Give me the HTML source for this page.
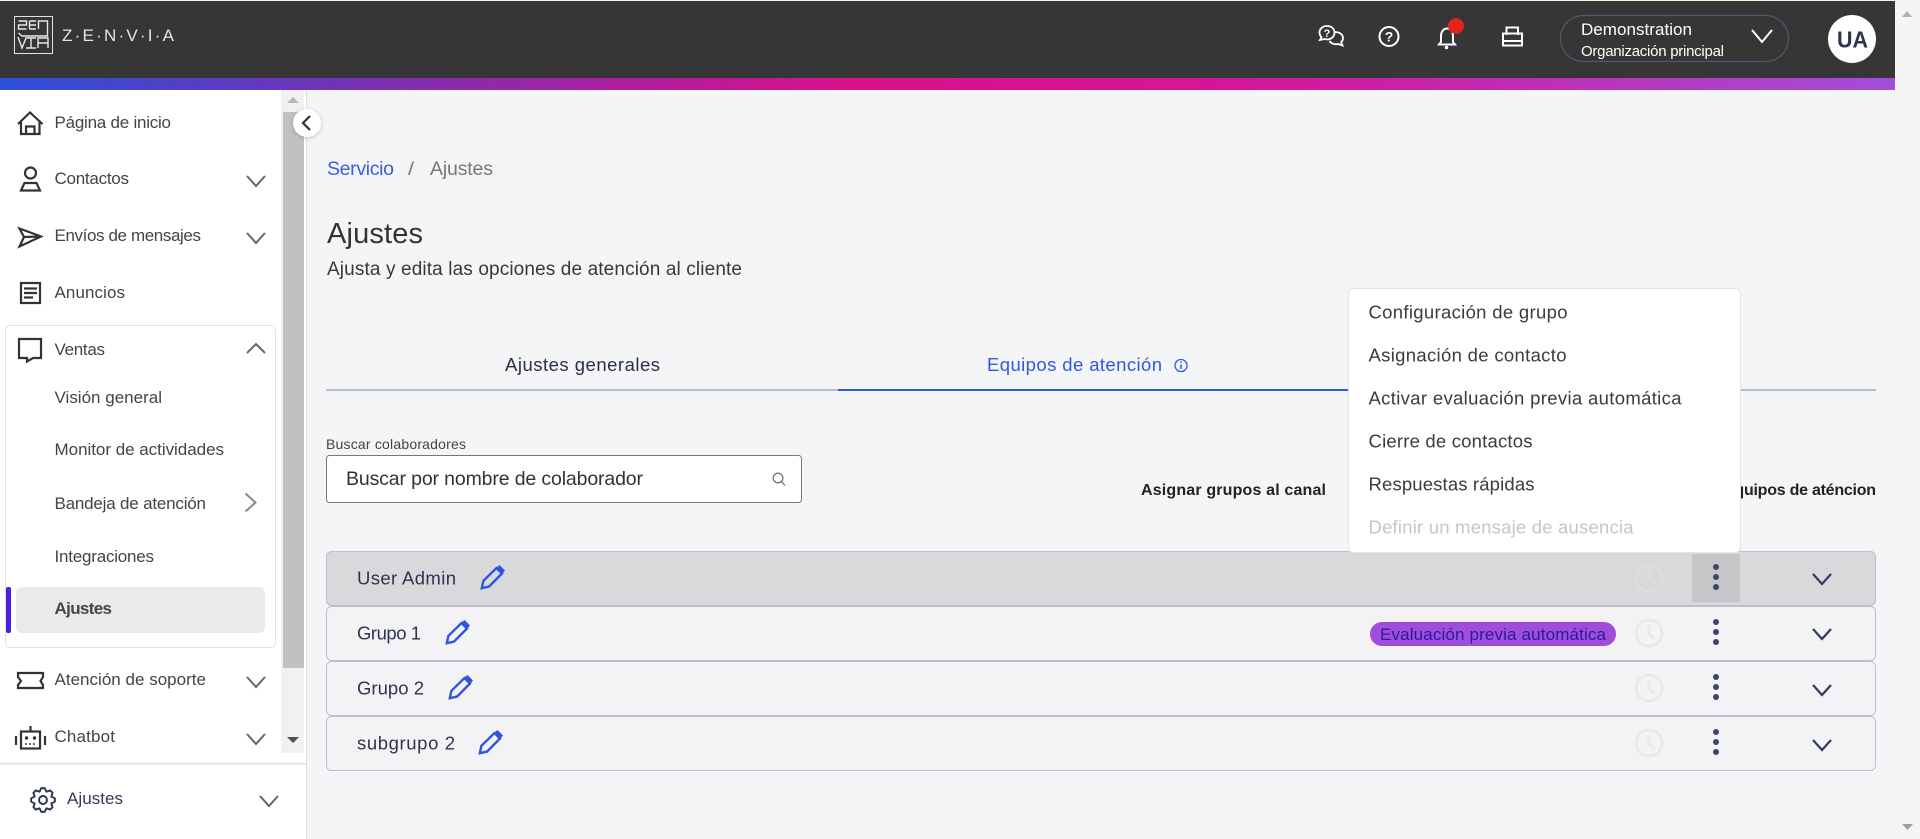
<!DOCTYPE html>
<html lang="es"><head><meta charset="utf-8"><title>Ajustes</title>
<style>
html,body{margin:0;padding:0;width:1920px;height:839px;overflow:hidden;background:#f4f5f7}
svg{display:block;font-family:"Liberation Sans",sans-serif}
.s{font-size:17px;fill:#444}
.m{font-size:18.500px;fill:#3c3c3c}
.r{font-size:18.500px;fill:#2f3350}
.ic{fill:none;stroke:#333;stroke-width:2.200}
.ch{fill:none;stroke:#666;stroke-width:2}
.rc{fill:none;stroke:#2e3a5e;stroke-width:2.200}
.cl{fill:none;stroke:#e9e9ea;stroke-width:3}
.d{fill:#3c4470}
.w{fill:none;stroke:#fff;stroke-width:2}
</style></head><body>
<svg width="1920" height="839" viewBox="0 0 1920 839" xmlns="http://www.w3.org/2000/svg">
<defs>
<linearGradient id="g" x1="0" x2="1895" y1="0" y2="0" gradientUnits="userSpaceOnUse">
<stop offset="0" stop-color="#2b50d8"/><stop offset=".17" stop-color="#7033b8"/><stop offset=".45" stop-color="#d9108c"/><stop offset=".68" stop-color="#d2189c"/><stop offset="1" stop-color="#a34ddb"/>
</linearGradient>
<filter id="sh" x="-30%" y="-30%" width="160%" height="160%"><feDropShadow dx="0" dy="1" stdDeviation="2" flood-color="#000" flood-opacity=".22"/></filter>
<g id="pen"><path d="M0.800 23.200L2.400 15.800L15.500 3L21 8.500L8 21.600Z" fill="none" stroke="#2f55e0" stroke-width="2.400"/><path d="M15 3L18.500 0L24 5.500L21 9.200Z" fill="#2f55e0"/></g>
<g id="clk"><circle r="13" class="cl"/><path d="M0-8V1L6 6" class="cl"/></g>
<g id="dots"><circle cy="-10" r="3" class="d"/><circle r="3" class="d"/><circle cy="10" r="3" class="d"/></g>
<path id="dn" d="M-9-5L0 5L9-5" />
</defs>

<rect width="1920" height="839" fill="#f4f5f7"/>
<rect y="790" width="1895" height="49" fill="#f3f3f4"/>
<rect x="1895" width="25" height="839" fill="#f5f5f5"/>
<path d="M1907 11L1902 17H1912Z" fill="#b0b0b0"/>
<path d="M1902 824H1913L1907.500 830Z" fill="#a0a0a0"/>

<!-- header -->
<rect width="1920" height="1" fill="#f2f2f2"/>
<rect y="1" width="1895" height="77" fill="#363636"/>
<rect y="78" width="1895" height="12" fill="url(#g)"/>
<rect x="14.500" y="16.500" width="38" height="37" fill="none" stroke="#e4e4e4" stroke-width="1"/>
<path d="M18.500 21H26.500V25H18.500V29H26.500M29.500 21H36M29.500 25H36M29.500 29H36M29.500 21V29M38.500 29V21H47.500V36H22L18.500 33M18 37L22 48L26 38H36M31 38V48M26 48H36M38 48V38H48V48M38 43H48" fill="none" stroke="#e8e8e8" stroke-width="1.400"/>
<text x="62" y="41" font-size="17" fill="#e4e4e4" textLength="112" lengthAdjust="spacing">Z·E·N·V·I·A</text>

<g fill="none" stroke="#fff" stroke-width="1.800" transform="translate(0,-1)">
<path d="M1327 27c-4.500 0-7.500 3-7.500 6.500 0 2 .8 3.500 2 4.700L1320 41l4.500-1c.8.300 1.700.4 2.500.4 4.500 0 7.500-3 7.500-6.800S1331.500 27 1327 27Z"/>
<path d="M1335 33c4.500 0 8 2.500 8 6 0 1.800-.6 3-1.800 4.200l1.300 3.300-4.200-1.500c-3.500.8-7.200-.3-8.800-3"/>
</g>
<text x="1327" y="37" font-size="11" font-weight="bold" fill="#fff" text-anchor="middle">?</text>
<circle cx="1389" cy="36.500" r="9.500" class="w"/>
<text x="1389" y="41.500" font-size="14" font-weight="bold" fill="#fff" text-anchor="middle">?</text>
<path d="M1441 42V36c0-4 2.500-7.500 6-7.500s6 3.500 6 7.500v6l2 2.500h-16Z" class="w"/>
<circle cx="1446.500" cy="47.500" r="1.800" fill="#fff"/>
<circle cx="1456" cy="26" r="8" fill="#e3241b"/>
<path d="M1506.500 35V27.500H1518V35M1503 33.500H1522V45.500H1503ZM1503 41H1522" class="w"/>
<rect x="1560.500" y="15.500" width="228" height="46" rx="23" fill="none" stroke="#4f566f" stroke-width="1.300"/>
<text x="1581" y="35" font-size="17" fill="#fff" textLength="111" lengthAdjust="spacing">Demonstration</text>
<text x="1581" y="56" font-size="15" fill="#fff" textLength="143" lengthAdjust="spacing">Organización principal</text>
<path d="M1752 30L1762 42L1772 30" class="w"/>
<circle cx="1852" cy="39" r="24" fill="#fff"/>
<text x="1837" y="47.500" font-size="23" font-weight="bold" fill="#2e3350" textLength="31" lengthAdjust="spacingAndGlyphs">UA</text>

<!-- sidebar -->
<rect y="90" width="306" height="749" fill="#fff"/>
<rect x="306" y="90" width="1" height="749" fill="#dedede"/>
<rect x="281" y="90" width="23" height="663" fill="#f1f1f1"/>
<rect x="283" y="112" width="21" height="556" fill="#c1c1c1"/>
<path d="M293 97L287 103H299Z" fill="#b8b8b8"/>
<path d="M287 737H299L293 743Z" fill="#505050"/>
<rect y="763" width="306" height="1.500" fill="#ddd"/>
<rect x="5.500" y="325.500" width="270" height="322" rx="5" fill="#fff" stroke="#e2e2e2"/>
<rect x="16" y="587" width="249" height="46" rx="6" fill="#eaeaea"/>
<rect x="6" y="587" width="5" height="46" rx="2" fill="#4a1fe0"/>

<path d="M18 124L30 112.500L42.500 124M21 121.500V134H39.500V121.500M26 134V126.500H34.500V134" class="ic"/>
<text x="54.500" y="128" class="s" textLength="116.500" lengthAdjust="spacing">Página de inicio</text>
<circle cx="30.500" cy="173" r="5.500" class="ic"/>
<path d="M21 190.500L24.500 183H36.500L40 190.500Z" class="ic"/>
<text x="54.500" y="184" class="s" textLength="74.500" lengthAdjust="spacing">Contactos</text>
<use href="#dn" x="256" y="181" class="ch"/>
<path d="M19.500 228.500L41 236.500L19.500 246.500L24 237ZM24 237L41 236.500" class="ic"/>
<text x="54.500" y="241" class="s" textLength="146.500" lengthAdjust="spacing">Envíos de mensajes</text>
<use href="#dn" x="256" y="238" class="ch"/>
<rect x="21" y="283" width="19" height="20" class="ic"/>
<path d="M24 288.500H37M24 293H37M24 297.500H33" class="ic"/>
<text x="54.500" y="298" class="s" textLength="70.500" lengthAdjust="spacing">Anuncios</text>
<path d="M19 339H41V358H33L27 361.500V358H19Z" class="ic"/>
<text x="54.500" y="355" class="s" textLength="50.500" lengthAdjust="spacing">Ventas</text>
<path d="M247 353L256 344L265 353" class="ch"/>
<text x="54.500" y="403" class="s" textLength="107.500" lengthAdjust="spacing">Visión general</text>
<text x="54.500" y="455" class="s" textLength="169.500" lengthAdjust="spacing">Monitor de actividades</text>
<text x="54.500" y="509" class="s" textLength="151.500" lengthAdjust="spacing">Bandeja de atención</text>
<path d="M245.500 493.500L255.500 502.500L245.500 511.500" fill="none" stroke="#888" stroke-width="2"/>
<text x="54.500" y="562" class="s" textLength="99.500" lengthAdjust="spacing">Integraciones</text>
<text x="54.500" y="614" class="s" font-weight="bold" textLength="57.500" lengthAdjust="spacing">Ajustes</text>
<path d="M18 673H43V677L40.500 681L43 685V688H18V685L21 681L18 677Z" class="ic"/>
<text x="54.500" y="685" class="s" textLength="151.500" lengthAdjust="spacing">Atención de soporte</text>
<use href="#dn" x="256" y="682" class="ch"/>
<rect x="21" y="731.500" width="19" height="17" class="ic"/>
<path d="M30.500 726V731M16 736V745M45 736V745" class="ic"/>
<circle cx="26.500" cy="738" r="1.700" fill="#333"/><circle cx="34.500" cy="738" r="1.700" fill="#333"/>
<path d="M25 744H36" fill="none" stroke="#333" stroke-width="1.500" stroke-dasharray="2 2"/>
<text x="54.500" y="742" class="s" textLength="60.500" lengthAdjust="spacing">Chatbot</text>
<use href="#dn" x="256" y="739" class="ch"/>
<g transform="translate(43,800)" fill="none" stroke="#2e3350" stroke-width="1.900" stroke-linejoin="round">
<circle r="4"/>
<path d="M11.880-1.670L11.880 1.670L8.310 3.440L9.580 7.220L7.220 9.580L3.440 8.310L1.670 11.880L-1.670 11.880L-3.440 8.310L-7.220 9.580L-9.580 7.220L-8.310 3.440L-11.880 1.670L-11.880-1.670L-8.310-3.440L-9.580-7.220L-7.220-9.580L-3.440-8.310L-1.670-11.880L1.670-11.880L3.440-8.310L7.220-9.580L9.580-7.220L8.310-3.440Z"/>
</g>
<text x="67" y="804" class="s" style="fill:#333a55" textLength="56" lengthAdjust="spacing">Ajustes</text>
<use href="#dn" x="269" y="801" class="ch"/>
<circle cx="307" cy="123" r="14" fill="#fff" filter="url(#sh)"/>
<path d="M310 116L303 123L310 130" class="ic"/>

<!-- content -->
<text x="327" y="175" font-size="19.500" fill="#3b5be8" textLength="67" lengthAdjust="spacing">Servicio</text>
<text x="408" y="175" font-size="18" fill="#777" textLength="6" lengthAdjust="spacingAndGlyphs">/</text>
<text x="430" y="175" font-size="19.500" fill="#777" textLength="63" lengthAdjust="spacing">Ajustes</text>
<text x="327" y="243" font-size="29" fill="#333" textLength="96" lengthAdjust="spacing">Ajustes</text>
<text x="327" y="275" font-size="19" fill="#383838" textLength="415" lengthAdjust="spacing">Ajusta y edita las opciones de atención al cliente</text>

<text x="505" y="371" font-size="18.500" fill="#2d2f45" textLength="155" lengthAdjust="spacing">Ajustes generales</text>
<text x="987" y="371" font-size="18.500" fill="#3158e0" textLength="175" lengthAdjust="spacing">Equipos de atención</text>
<circle cx="1181" cy="365.500" r="6" fill="none" stroke="#3158e0" stroke-width="1.300"/>
<path d="M1181 364.500V369M1181 361.500V363" stroke="#3158e0" stroke-width="1.500"/>
<rect x="326" y="389" width="512" height="2" fill="#b9bccb"/>
<rect x="838" y="389" width="510" height="2" fill="#3158e0"/>
<rect x="1741" y="389" width="135" height="2" fill="#b9bccb"/>

<text x="326" y="449" font-size="14" fill="#444" textLength="140" lengthAdjust="spacing">Buscar colaboradores</text>
<rect x="326.500" y="455.500" width="475" height="47" rx="3" fill="#fff" stroke="#777" stroke-width="1"/>
<text x="346" y="485" font-size="19.500" fill="#333" textLength="297" lengthAdjust="spacing">Buscar por nombre de colaborador</text>
<circle cx="778" cy="478" r="4.800" fill="none" stroke="#777" stroke-width="1.300"/>
<path d="M781.500 481.500L785 485.500" stroke="#777" stroke-width="1.300"/>
<text x="1141" y="495" font-size="16" font-weight="bold" fill="#222" textLength="185" lengthAdjust="spacing">Asignar grupos al canal</text>
<text x="1724" y="495" font-size="16" font-weight="bold" fill="#222" textLength="152" lengthAdjust="spacing">Equipos de aténcion</text>

<g stroke="#bcbfcc" stroke-width="1">
<rect x="326.500" y="551.500" width="1549" height="54" rx="5" fill="#d9d9db"/>
<rect x="326.500" y="606.500" width="1549" height="54" rx="5" fill="#f3f3f6"/>
<rect x="326.500" y="661.500" width="1549" height="54" rx="5" fill="#f3f3f6"/>
<rect x="326.500" y="716.500" width="1549" height="54" rx="5" fill="#f3f3f6"/>
</g>
<text x="357" y="584.500" class="r" textLength="99" lengthAdjust="spacing">User Admin</text>
<text x="357" y="639.500" class="r" textLength="64" lengthAdjust="spacing">Grupo 1</text>
<text x="357" y="694.500" class="r" textLength="67" lengthAdjust="spacing">Grupo 2</text>
<text x="357" y="749.500" class="r" textLength="98" lengthAdjust="spacing">subgrupo 2</text>
<use href="#pen" x="481" y="565"/><use href="#pen" x="446" y="620"/><use href="#pen" x="449" y="675"/><use href="#pen" x="479" y="730"/>
<rect x="1370" y="622" width="246" height="24" rx="12" fill="#a14ddb"/>
<text x="1380" y="640" font-size="17" fill="#2a1aa0" textLength="226" lengthAdjust="spacing">Evaluación previa automática</text>
<g transform="translate(1649,578)" fill="none" stroke="#dddddf" stroke-width="3"><circle r="13"/><path d="M0-8V1L6 6"/></g>
<use href="#clk" x="1649" y="633"/><use href="#clk" x="1649" y="688"/><use href="#clk" x="1649" y="743"/>
<rect x="1692" y="554" width="48" height="48" rx="2" fill="#c6c6c8"/>
<use href="#dots" x="1716" y="577"/><use href="#dots" x="1716" y="632"/><use href="#dots" x="1716" y="687"/><use href="#dots" x="1716" y="742"/>
<use href="#dn" x="1822" y="579" class="rc"/><use href="#dn" x="1822" y="634" class="rc"/><use href="#dn" x="1822" y="690" class="rc"/><use href="#dn" x="1822" y="745" class="rc"/>

<!-- menu -->
<rect x="1348.500" y="288.500" width="392" height="264" rx="5" fill="#fff" stroke="#e4e4e6"/>
<text x="1368.500" y="318.500" class="m" textLength="199" lengthAdjust="spacing">Configuración de grupo</text>
<text x="1368.500" y="361.500" class="m" textLength="198" lengthAdjust="spacing">Asignación de contacto</text>
<text x="1368.500" y="404.500" class="m" textLength="313" lengthAdjust="spacing">Activar evaluación previa automática</text>
<text x="1368.500" y="447.500" class="m" textLength="164" lengthAdjust="spacing">Cierre de contactos</text>
<text x="1368.500" y="490.500" class="m" textLength="166" lengthAdjust="spacing">Respuestas rápidas</text>
<text x="1368.500" y="533.500" class="m" style="fill:#c6c6c6" textLength="265" lengthAdjust="spacing">Definir un mensaje de ausencia</text>
</svg>
</body></html>
